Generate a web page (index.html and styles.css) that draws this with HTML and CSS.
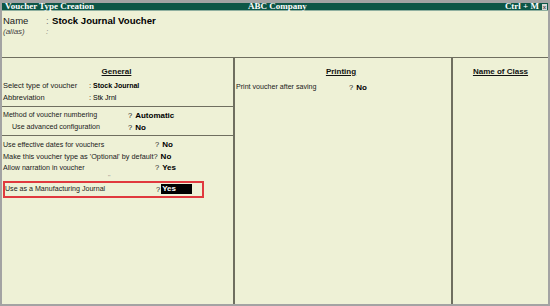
FILE: index.html
```html
<!DOCTYPE html>
<html lang="en">
<head>
    <meta charset="UTF-8">
    <title>Voucher Type Creation</title>
    <link rel="stylesheet" href="styles.css">
</head>
<body>
    <div class="window">
        <div class="titlebar">
            <span class="tb-left">Voucher Type Creation</span>
            <span class="tb-center">ABC Company</span>
            <span class="tb-right">Ctrl + M <span class="close">x</span></span>
        </div>
        <div class="head">
            <div class="name-row"><span class="nlabel">Name</span><span class="ncolon">:</span><span class="nvalue">Stock Journal Voucher</span></div>
            <div class="alias-row"><span class="nlabel">(alias)</span><span class="ncolon">:</span></div>
        </div>
        <div class="panels">
            <div class="col general">
                <div class="col-title"><u>General</u></div>
                <div class="group first">
                    <div class="row"><span class="lbl w-sel">Select type of voucher</span><span class="sep">:</span><b class="val small">Stock Journal</b></div>
                    <div class="row"><span class="lbl w-sel">Abbreviation</span><span class="sep">:</span><span class="val plain">Stk Jrnl</span></div>
                </div>
                <div class="group second">
                    <div class="row"><span class="lbl w-meth">Method of voucher numbering</span><span class="q">?</span><b class="val">Automatic</b></div>
                    <div class="row indent"><span class="lbl w-adv">Use advanced configuration</span><span class="q">?</span><b class="val">No</b></div>
                </div>
                <div class="group third">
                    <div class="row"><span class="lbl w-eff">Use effective dates for vouchers</span><span class="q">?</span><b class="val">No</b></div>
                    <div class="row wide"><span class="lbl">Make this voucher type as 'Optional' by default</span><span class="q">?</span><b class="val">No</b></div>
                    <div class="row"><span class="lbl w-eff">Allow narration in voucher</span><span class="q">?</span><b class="val">Yes</b></div>
                    <div class="mark">''</div>
                    <div class="row boxed"><span class="lbl w-mfg">Use as a Manufacturing Journal</span><span class="q tight">?</span><b class="val cursor">Yes</b></div>
                </div>
            </div>
            <div class="col printing">
                <div class="col-title"><u>Printing</u></div>
                <div class="row print-row"><span class="lbl w-print">Print voucher after saving</span><span class="q">?</span><b class="val">No</b></div>
            </div>
            <div class="col classes">
                <div class="col-title"><u>Name of Class</u></div>
            </div>
        </div>
    </div>
</body>
</html>
```

FILE: styles.css
```css
 body{
     margin: 0;
     background-color: #eef1d6;
 }
 .window{
     width: 550px;
     height: 306px;
     box-sizing: border-box;
     border: 2px solid #a3a3a3;
     border-top-width: 3px;
     background-color: #eef1d6;
     display: flex;
     flex-direction: column;
     font-family: "Liberation Sans", Arial, sans-serif;
     color: #1a1a1a;
 }
 .titlebar{
     height: 7px;
     background-color: #0d5646;
     border-bottom: 1px solid #8fb0a0;
     display: flex;
     align-items: center;
     justify-content: space-between;
     padding: 0 1px 0 3px;
     font-family: "Liberation Serif", "Times New Roman", serif;
     font-weight: bold;
     font-size: 9px;
     line-height: 7px;
     color: #ffffff;
     position: relative;
 }
 .tb-center{
     position: absolute;
     left: 246px;
 }
 .tb-right{
     display: flex;
     align-items: center;
     gap: 3px;
 }
 .close{
     display: inline-block;
     width: 5px;
     height: 6px;
     background-color: #d8d8d8;
     color: #555;
     font-family: "Liberation Sans", sans-serif;
     font-size: 6px;
     line-height: 6px;
     text-align: center;
 }
 .head{
     height: 47px;
     box-sizing: border-box;
     padding: 4px 0 0 1px;
     border-bottom: 1px solid #6f6f60;
 }
 .name-row, .alias-row{
     display: flex;
     align-items: center;
 }
 .name-row{
     height: 11px;
     font-size: 9.5px;
 }
 .alias-row{
     height: 10px;
     font-size: 8px;
     font-style: italic;
     color: #444;
 }
 .nlabel{
     width: 43px;
 }
 .ncolon{
     width: 6px;
     color: #777;
 }
 .nvalue{
     font-weight: bold;
     font-size: 9.6px;
     color: #000;
 }
 .panels{
     flex: 1;
     display: flex;
 }
 .col{
     box-sizing: border-box;
 }
 .general{
     width: 231px;
     padding-top: 8px;
 }
 .printing{
     width: 218px;
     border-left: 2px solid #6f6f60;
     padding-top: 8px;
 }
 .classes{
     flex: 1;
     border-left: 2px solid #6f6f60;
     padding-top: 8px;
 }
 .col-title{
     text-align: center;
     font-weight: bold;
     font-size: 8px;
     height: 11px;
     line-height: 11px;
     color: #111;
 }
 .general .col-title{
     padding-right: 2px;
 }
 .printing .col-title{
     padding-right: 4px;
 }
 .group{
     border-bottom: 1px solid #6f6f60;
 }
 .first{
     padding: 2px 0 3px;
 }
 .first .row{
     font-size: 7.5px;
 }
 .second{
     padding: 2px 0 2px;
 }
 .third{
     border-bottom: none;
     padding-top: 3px;
 }
 .row{
     display: flex;
     align-items: center;
     height: 12px;
     padding-left: 1px;
     font-size: 7.1px;
     white-space: nowrap;
 }
 .indent{
     padding-left: 10px;
 }
 .lbl{
     display: inline-block;
 }
 .w-sel{ width: 86px; }
 .w-meth{ width: 125px; }
 .w-adv{ width: 116px; }
 .w-eff{ width: 152px; }
 .w-mfg{ width: 151px; }
 .w-print{ width: 113px; }
 .sep{
     width: 4px;
 }
 .q{
     font-size: 7.5px;
     margin-right: 3px;
 }
 .q.tight{
     margin-right: 1px;
 }
 .val{
     font-size: 8px;
     color: #000;
 }
 .first .val.small{
     font-size: 7px;
 }
 .first .val.plain{
     font-weight: normal;
     font-size: 7px;
 }
 .third .row{
     height: 11.5px;
 }
 .third .wide{
     font-size: 7.3px;
 }
 .mark{
     height: 7px;
     padding-left: 106px;
     font-size: 6px;
     line-height: 7px;
     color: #888;
 }
 .third .boxed{
     box-sizing: border-box;
     margin: 0 0 0 1px;
     width: 201px;
     height: 17px;
     border: 2px solid #e0393e;
     padding-left: 0;
 }
 .print-row{
     margin-top: 4px;
 }
 .cursor{
     background-color: #000;
     color: #fff;
     width: 30px;
     height: 10px;
     line-height: 10px;
     padding-left: 1px;
 }
```
